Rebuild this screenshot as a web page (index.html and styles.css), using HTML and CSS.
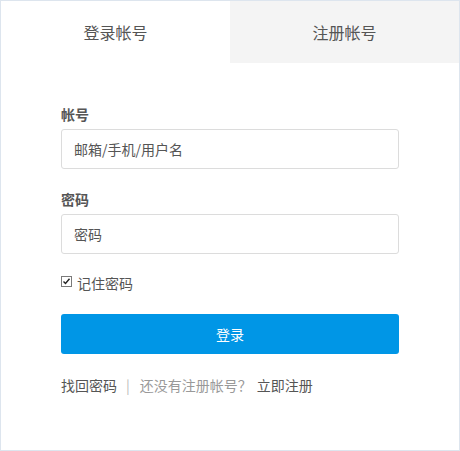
FILE: index.html
```html
<!DOCTYPE html>
<html lang="zh-CN">
<head>
<meta charset="utf-8">
<title>登录</title>
<link rel="stylesheet" href="styles.css">
</head>
<body>
<div class="panel">
  <div class="tabs">
    <div class="tab active">登录帐号</div>
    <div class="tab">注册帐号</div>
  </div>
  <form class="form">
    <label class="label">帐号</label>
    <div class="input">邮箱/手机/用户名</div>
    <label class="label">密码</label>
    <div class="input">密码</div>
    <div class="remember">
      <svg class="check" width="11" height="11" viewBox="0 0 11 11"><rect x="0.5" y="0.5" width="10" height="10" fill="#fff" stroke="#7a7a7a"/><path d="M2.5 5.5 L4.5 7.5 L8.5 2.8" fill="none" stroke="#222" stroke-width="1.4"/></svg>
      <span>记住密码</span>
    </div>
    <div class="btn">登录</div>
    <div class="links">
      <span class="dark">找回密码</span>
      <span class="sep">|</span>
      <span class="muted">还没有注册帐号？</span>
      <span class="dark reg">立即注册</span>
    </div>
  </form>
</div>
</body>
</html>
```
FILE: styles.css
```css
* { box-sizing: border-box; }
html, body { margin: 0; padding: 0; background: #fff; }
body { font-family: "Noto Sans CJK SC", "Noto Sans", sans-serif; color: #555; }
.panel { width: 460px; height: 451px; border: 1px solid #dde5ee; }
.tabs { display: flex; height: 62px; }
.tab { flex: 1; display: flex; align-items: center; justify-content: center; font-size: 16px; color: #555; background: #f4f4f4; }
.tab.active { background: #fff; }
.form { display: flex; flex-direction: column; padding: 41px 60px 0 60px; }
.label { font-size: 14px; line-height: 20px; font-weight: bold; color: #555; margin-bottom: 5px; }
.input { height: 40px; border: 1px solid #dcdcdc; border-radius: 3px; padding-left: 12px; display: flex; align-items: center; font-size: 14px; color: #555; margin-bottom: 20px; }
.remember { display: flex; align-items: center; gap: 5px; font-size: 14px; line-height: 20px; margin-top: -1px; color: #555; }
.check { display: block; margin-top: -4px; }
.btn { margin-top: 21px; height: 40px; background: #0096e6; border-radius: 3px; color: #fff; font-size: 14px; display: flex; align-items: center; justify-content: center; }
.links { margin-top: 21px; font-size: 14px; line-height: 20px; display: flex; }
.links .dark { color: #555; }
.links .sep { color: #bbb; margin: 0 10px 0 9px; }
.links .muted { color: #999; }
.links .reg { margin-left: 5px; }
```
